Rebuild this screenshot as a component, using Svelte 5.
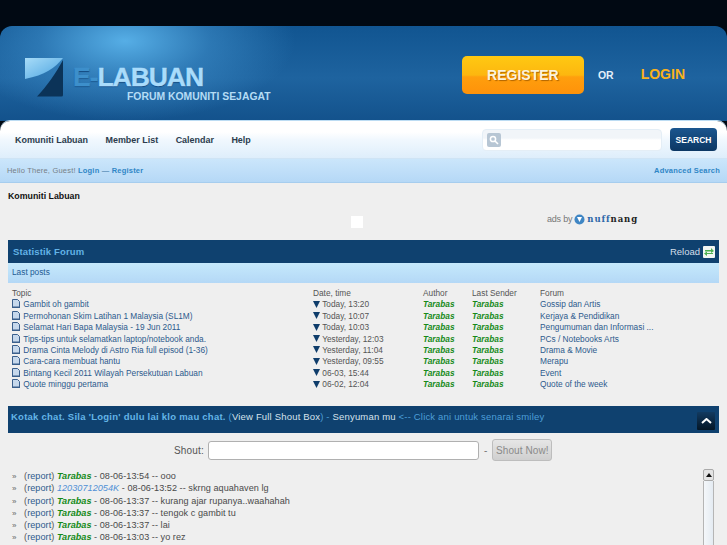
<script>
  const posts = [
    ['Gambit oh gambit','Today, 13:20','Gossip dan Artis'],
    ['Permohonan Skim Latihan 1 Malaysia (SL1M)','Today, 10:07','Kerjaya & Pendidikan'],
    ['Selamat Hari Bapa Malaysia - 19 Jun 2011','Today, 10:03','Pengumuman dan Informasi ...'],
    ['Tips-tips untuk selamatkan laptop/notebook anda.','Yesterday, 12:03','PCs / Notebooks Arts'],
    ['Drama Cinta Melody di Astro Ria full episod (1-36)','Yesterday, 11:04','Drama & Movie'],
    ['Cara-cara membuat hantu','Yesterday, 09:55','Merapu'],
    ['Bintang Kecil 2011 Wilayah Persekutuan Labuan','06-03, 15:44','Event'],
    ['Quote minggu pertama','06-02, 12:04','Quote of the week']
  ];
  const shouts = [
    ['Tarabas','08-06-13:54','ooo'],
    ['12030712054K','08-06-13:52','skrng aquahaven lg'],
    ['Tarabas','08-06-13:37','kurang ajar rupanya..waahahah'],
    ['Tarabas','08-06-13:37','tengok c gambit tu'],
    ['Tarabas','08-06-13:37','lai'],
    ['Tarabas','08-06-13:03','yo rez']
  ];
</script>

<div class="page">
  <header class="top">
    <div class="logo">
      <svg width="38" height="40" viewBox="0 0 38 40">
        <defs><linearGradient id="lg" x1="0" y1="0" x2="1" y2="1"><stop offset="0" stop-color="#a8dcf8"/><stop offset="1" stop-color="#4aa3e0"/></linearGradient></defs>
        <path d="M0 0H38C30 10 20 17 0 21Z" fill="url(#lg)"/>
        <path d="M38 2V37a1.500 1.500 0 0 1-1.500 1.500H12C22 28 31 15 38 2Z" fill="#0b3358"/>
      </svg>
      <div class="brand">
        <div class="name"><span class="e">E-</span>LABUAN</div>
        <div class="tag">FORUM KOMUNITI SEJAGAT</div>
      </div>
    </div>
    <div class="cta">
      <span class="reg">REGISTER</span>
      <span class="or">OR</span>
      <span class="login">LOGIN</span>
    </div>
  </header>

  <nav class="nav">
    <div class="links">
      <span>Komuniti Labuan</span><span>Member List</span><span>Calendar</span><span>Help</span>
    </div>
    <div class="search">
      <div class="box">
        <span class="mag">
          <svg width="10" height="10" viewBox="0 0 10 10"><circle cx="4" cy="4" r="2.600" fill="none" stroke="#fff" stroke-width="1.500"/><path d="M6 6l3 3" stroke="#fff" stroke-width="1.600"/></svg>
        </span>
      </div>
      <span class="sbtn">SEARCH</span>
    </div>
  </nav>

  <div class="sub">
    <div><span class="hello">Hello There, Guest!</span> <b>Login</b> <span class="dash">—</span> <b>Register</b></div>
    <b>Advanced Search</b>
  </div>

  <main class="content">
    <div class="crumb">Komuniti Labuan</div>
    <div class="adrow">
      <span class="adbox"></span>
      <span class="ads">
        <span class="adsby">ads by</span>
        <svg width="11" height="11" viewBox="0 0 11 11"><circle cx="5.500" cy="5.500" r="5" fill="#3f86c4"/><path d="M3 3l2.500 5L8 3" fill="#fff"/></svg>
        <span class="nn"><i>nuff</i>nang</span>
      </span>
    </div>

    <section class="stat">
      <div class="bar">
        <span class="title">Statistik Forum</span>
        <span class="reload">Reload
          <span class="ricon"><svg width="12" height="12" viewBox="0 0 12 12"><path d="M2 4h6V2l3 3-3 2V5.500H2Z" fill="#4caf50"/><path d="M10 8H4v2L1 7.500 4 5.500V7h6Z" fill="#4caf50"/></svg></span>
        </span>
      </div>
      <div class="lastposts">Last posts</div>
      <div class="table">
        <div class="row head"><span class="topic">Topic</span><span>Date, time</span><span>Author</span><span>Last Sender</span><span>Forum</span></div>
        {#each posts as p}
          <div class="row">
            <span class="topic link">
              <svg class="doc" width="8" height="9" viewBox="0 0 8 9"><path d="M.5.5h5l2 2v6h-7Z" fill="#c6d8ec" stroke="#3a5f8c"/><path d="M0 7.500h8V9H0Z" fill="#3a5f8c"/></svg>
              {p[0]}
            </span>
            <span class="date"><svg width="7" height="7" viewBox="0 0 7 7"><path d="M0 0h7L3.500 7Z" fill="#0f3d6b"/></svg> {p[1]}</span>
            <span class="user">Tarabas</span>
            <span class="user">Tarabas</span>
            <span class="link">{p[2]}</span>
          </div>
        {/each}
      </div>
    </section>

    <section class="chat">
      <div class="chatbar">
        <div class="chattext"><b>Kotak chat. Sila 'Login' dulu lai klo mau chat.</b> (<span class="w">View Full Shout Box</span>) - <span class="w">Senyuman mu</span> &lt;-- Click ani untuk senarai smiley</div>
        <span class="collapse"><svg width="11" height="6" viewBox="0 0 11 6"><path d="M1 5l4.500-4L10 5" fill="none" stroke="#fff" stroke-width="2"/></svg></span>
      </div>
      <div class="shoutrow">
        <label for="shout">Shout:</label>
        <input id="shout" type="text" />
        <span class="sep">-</span>
        <button type="button">Shout Now!</button>
      </div>
      <div class="log">
        <div class="lines">
          {#each shouts as s}
            <div class="line">
              <span class="raquo">»</span>
              <span class="r">(<span class="link">report</span>)</span>
              <span class={s[0] === 'Tarabas' ? 'user big' : 'other'}>{s[0]}</span>
              <span> - {s[1]} -- {s[2]}</span>
            </div>
          {/each}
        </div>
        <div class="scroll">
          <span class="arrow"><svg width="6" height="4" viewBox="0 0 6 4"><path d="M0 4L3 0l3 4Z" fill="#111"/></svg></span>
          <span class="thumb"></span>
        </div>
      </div>
    </section>
  </main>
</div>

<style>
  :global(body) { margin: 0; background: #efefef; }
  .page {
    width: 727px; height: 545px; overflow: hidden;
    font-family: "Liberation Sans", Arial, sans-serif;
    background: #010913;
    padding-top: 26px; box-sizing: border-box;
    display: flex; flex-direction: column;
  }
  .top {
    height: 95px; flex: none; box-sizing: border-box;
    border-radius: 12px 12px 0 0;
    background:
      radial-gradient(ellipse 170px 80px at 125px 15px, #56aee6 0%, rgba(60,140,200,.6) 50%, rgba(27,93,152,0) 100%),
      linear-gradient(#115591, #1e639f 55%, #13528c);
    display: flex; justify-content: space-between; align-items: flex-start;
    padding: 32px 42px 0 25px;
  }
  .logo { display: flex; align-items: flex-start; gap: 10px; }
  .logo svg { display: block; }
  .brand { margin-top: 6px; }
  .name { font-size: 26.500px; line-height: 27px; font-weight: bold; color: #a9dcfb; letter-spacing: -1.050px; -webkit-text-stroke: .4px currentColor; text-shadow: 0 1px 1px #134a80; }
  .name .e { color: #3d8fcb; }
  .tag { font-size: 10.400px; line-height: 11px; font-weight: bold; color: #b4dcf5; margin: 0 0 0 54px; white-space: nowrap; }
  .cta { display: flex; align-items: center; margin-top: -2px; }
  .reg {
    width: 122px; height: 38px; border-radius: 5px; color: #fbf3dc; font-weight: bold; font-size: 14px;
    display: flex; align-items: center; justify-content: center;
    background: linear-gradient(#ffc912, #fdb70f 50%, #ff9f0d 55%, #fe920a);
    text-shadow: 1px 1px 1px #b06400;
  }
  .or { color: #e4eff8; font-weight: bold; font-size: 10.500px; margin-left: 14px; }
  .login { color: #fab21a; font-weight: bold; font-size: 14px; margin-left: 27px; position: relative; top: -1px; }

  .nav {
    height: 38px; flex: none; box-sizing: border-box;
    background: linear-gradient(#ffffff 30%, #f1f8fe 50%, #deeefb);
    border-radius: 10px 10px 0 0;
    display: flex; justify-content: space-between; align-items: center;
    padding: 0 10px 0 15px;
    border-bottom: 1px solid #cfe4f5;
    box-shadow: 0 -1px 0 #bcdcf3;
  }
  .links { display: flex; gap: 17.500px; font-size: 8.950px; font-weight: bold; color: #2c3c4d; }
  .search { display: flex; align-items: center; gap: 8px; }
  .box { width: 180px; height: 22px; border: 1px solid #e4eef6; border-radius: 4px; box-sizing: border-box; background: linear-gradient(#f1f5f9 40%, #fff 50%); display: flex; align-items: center; padding-left: 4px; }
  .mag { width: 14px; height: 14px; border-radius: 2px; background: #b7c6d4; display: flex; align-items: center; justify-content: center; }
  .sbtn { width: 47px; height: 23px; border-radius: 4px; background: linear-gradient(#1b568f, #0c3763); color: #fff; font-weight: bold; font-size: 8.500px; display: flex; align-items: center; justify-content: center; }

  .sub {
    height: 24px; flex: none; box-sizing: border-box;
    background: linear-gradient(#cbe6fb, #b5d8f6);
    border-bottom: 1px solid #a6cdee;
    display: flex; justify-content: space-between; align-items: center;
    padding: 0 7px; font-size: 7.500px; color: #2f86c6; letter-spacing: .2px;
  }
  .hello { color: #777f87; font-weight: normal; }
  .dash { color: #2f6f9f; }

  .content { flex: 1; background: #efefef; padding: 0 8px; min-height: 0; }
  .crumb { font-size: 8.800px; font-weight: bold; color: #111; line-height: 11px; margin-top: 8px; }
  .adrow { height: 38px; display: flex; align-items: flex-start; }
  .adbox { width: 12px; height: 12px; background: #fff; margin: 14px 0 0 343px; }
  .ads { display: flex; align-items: center; gap: 2px; margin: 11px 0 0 184px; height: 12px; }
  .adsby { font-size: 9px; color: #777; letter-spacing: -.2px; }
  .nn { font-family: "DejaVu Serif", serif; font-weight: bold; font-size: 8.500px; letter-spacing: .9px; color: #222; }
  .nn i { font-style: normal; color: #2b66a8; }

  .bar { height: 23px; background: #0f416f; display: flex; justify-content: space-between; align-items: center; padding: 0 4px 0 5px; box-sizing: border-box; }
  .title { font-size: 9.500px; font-weight: bold; color: #63b3e6; letter-spacing: .15px; }
  .reload { font-size: 9.500px; color: #d4dfe9; display: flex; align-items: center; gap: 3px; }
  .ricon { width: 12px; height: 12px; background: #f2f6f2; border-radius: 1px; display: flex; }
  .lastposts { height: 20px; box-sizing: border-box; background: linear-gradient(#c5e9fc, #b4d8f6); color: #1f5b94; font-size: 8.300px; padding-left: 4px; line-height: 19px; }

  .table { margin-top: 5px; font-size: 8.300px; line-height: 11.370px; color: #555; }
  .row { display: grid; grid-template-columns: 305px 110px 49px 68px 1fr; white-space: nowrap; }
  .topic { padding-left: 4px; }
  .link { color: #2d5a8d; }
  .doc { vertical-align: -1px; margin-right: 1px; }
  .date svg { vertical-align: -0.500px; }
  .user { color: #158a18; font-weight: bold; font-style: italic; }

  .chat { margin-top: 16px; }
  .chatbar { height: 27px; background: #0f416f; display: flex; justify-content: space-between; padding: 0 4px 0 3px; box-sizing: border-box; }
  .chattext { font-size: 9.500px; color: #4d9fd8; letter-spacing: .18px; padding-top: 5px; line-height: 11px; }
  .chattext b { color: #64b5e8; letter-spacing: .25px; }
  .w { color: #d6e2ec; }
  .collapse { width: 18px; height: 18px; margin-top: 6px; background: linear-gradient(#123a60, #041626); display: flex; align-items: center; justify-content: center; border-radius: 1px; }

  .shoutrow { display: flex; align-items: center; margin-top: 6px; height: 22px; font-size: 10px; color: #555; }
  .shoutrow label { margin-left: 166px; width: 34px; letter-spacing: .15px; }
  input { width: 271px; height: 19px; box-sizing: border-box; border: 1px solid #b0b0b0; border-radius: 3px; background: #fff; padding: 0; margin: 0; }
  .sep { margin: 0 5px 0 5px; color: #777; }
  button { width: 60px; height: 22px; box-sizing: border-box; border: 1px solid #bdbdbd; border-radius: 3px; background: linear-gradient(#e6e6e6, #cfcfcf); color: #8a8a8a; font: 10px "Liberation Sans", sans-serif; padding: 0; letter-spacing: .1px; }

  .log { display: flex; justify-content: space-between; margin-top: 8px; padding-right: 5px; }
  .lines { padding-left: 4px; font-size: 9.100px; color: #4a4a4a; padding-top: 1px; }
  .line { white-space: nowrap; letter-spacing: .05px; height: 12.100px; line-height: 12.100px; }
  .raquo { display: inline-block; width: 9.500px; color: #666; font-size: 8px; line-height: 1; }
  .r { color: #555; }
  .user.big { letter-spacing: 0; }
  .other { color: #4f8fd6; font-style: italic; }
  .scroll { width: 11px; display: flex; flex-direction: column; }
  .arrow { height: 12px; box-sizing: border-box; background: #e4e4e4; border: 1px solid #aaa; border-radius: 2px; display: flex; align-items: center; justify-content: center; }
  .thumb { height: 70px; box-sizing: border-box; border: 1px solid #b5b5b5; border-top: none; background: linear-gradient(90deg, #f4f7fa, #e4ebf2); }
</style>
